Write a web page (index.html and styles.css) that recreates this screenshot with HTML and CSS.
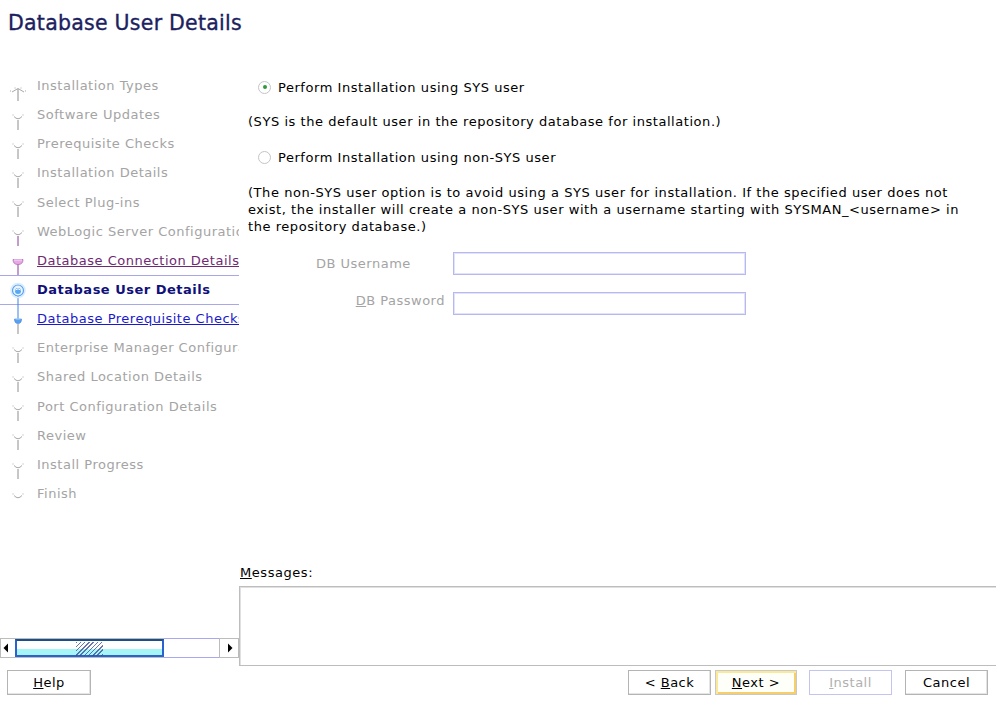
FILE: index.html
```html
<!DOCTYPE html>
<html>
<head>
<meta charset="utf-8">
<link rel="stylesheet" href="styles.css">
</head>
<body>
<div class="app">
  <header class="title">Database User Details</header>
  <div class="middle">
    <aside class="left">
      <nav class="steps">
        <div class="step"><svg class="ico" viewBox="0 0 37 29"><path class="ln" d="M18 17 V43"/><path class="cp" d="M12 20 L18 16.5 L24 20 M10.5 18.5 v1 M25.5 18.5 v1 M15 15.5 v1 M21 15.5 v1"/></svg><span>Installation Types</span></div>
        <div class="step"><svg class="ico" viewBox="0 0 37 29"><path class="ln" d="M18 19 V43"/><path class="cp" d="M14 15.5 Q18 20 22 15.5 M13 13.5 v1 M23 13.5 v1"/></svg><span>Software Updates</span></div>
        <div class="step"><svg class="ico" viewBox="0 0 37 29"><path class="ln" d="M18 19 V43"/><path class="cp" d="M14 15.5 Q18 20 22 15.5 M13 13.5 v1 M23 13.5 v1"/></svg><span>Prerequisite Checks</span></div>
        <div class="step"><svg class="ico" viewBox="0 0 37 29"><path class="ln" d="M18 19 V43"/><path class="cp" d="M14 15.5 Q18 20 22 15.5 M13 13.5 v1 M23 13.5 v1"/></svg><span>Installation Details</span></div>
        <div class="step"><svg class="ico" viewBox="0 0 37 29"><path class="ln" d="M18 19 V43"/><path class="cp" d="M14 15.5 Q18 20 22 15.5 M13 13.5 v1 M23 13.5 v1"/></svg><span>Select Plug-ins</span></div>
        <div class="step"><svg class="ico" viewBox="0 0 37 29"><path class="ln purple" d="M18 19 V41"/><path class="cp" d="M14 15.5 Q18 20 22 15.5 M13 13.5 v1 M23 13.5 v1"/></svg><span>WebLogic Server Configuration Details</span></div>
        <div class="step visited"><svg class="ico" viewBox="0 0 37 29"><path class="ln purple" d="M18 17 V29"/><path class="ln blue" d="M18 29 V37"/><path d="M13 13.5 Q13 18.5 18 18.5 Q23 18.5 23 13.5 Z" fill="#e8a8e8" stroke="#b070b0" stroke-width="0.8"/><path d="M14 14 H22" stroke="#f8e0f8" stroke-width="1"/></svg><span>Database Connection Details</span></div>
        <div class="step current"><svg class="ico" viewBox="0 0 37 29"><path class="ln blue" d="M18 20 V45"/><circle cx="18" cy="14.5" r="7" fill="none" stroke="#d8ecff" stroke-width="1.5"/><circle cx="18" cy="14.5" r="5.5" fill="#e8f4ff" stroke="#5aa0f0" stroke-width="1.2"/><circle cx="18" cy="15" r="3" fill="#5aa8f0"/><path d="M15.5 14 Q18 11.5 20.5 14" stroke="#ffffff" stroke-width="1" fill="none"/></svg><span>Database User Details</span></div>
        <div class="step link"><svg class="ico" viewBox="0 0 37 29"><path class="ln" d="M18 19 V43"/><path d="M14.5 14 Q14.5 18.5 18 18.5 Q21.5 18.5 21.5 14 Z" fill="#58a0f0" stroke="#3c80d8" stroke-width="0.6"/><path d="M15.5 14 H20.5" stroke="#b8dcff" stroke-width="1"/></svg><span>Database Prerequisite Checks</span></div>
        <div class="step"><svg class="ico" viewBox="0 0 37 29"><path class="ln" d="M18 19 V43"/><path class="cp" d="M14 15.5 Q18 20 22 15.5 M13 13.5 v1 M23 13.5 v1"/></svg><span>Enterprise Manager Configuration Details</span></div>
        <div class="step"><svg class="ico" viewBox="0 0 37 29"><path class="ln" d="M18 19 V43"/><path class="cp" d="M14 15.5 Q18 20 22 15.5 M13 13.5 v1 M23 13.5 v1"/></svg><span>Shared Location Details</span></div>
        <div class="step"><svg class="ico" viewBox="0 0 37 29"><path class="ln" d="M18 19 V43"/><path class="cp" d="M14 15.5 Q18 20 22 15.5 M13 13.5 v1 M23 13.5 v1"/></svg><span>Port Configuration Details</span></div>
        <div class="step"><svg class="ico" viewBox="0 0 37 29"><path class="ln" d="M18 19 V43"/><path class="cp" d="M14 15.5 Q18 20 22 15.5 M13 13.5 v1 M23 13.5 v1"/></svg><span>Review</span></div>
        <div class="step"><svg class="ico" viewBox="0 0 37 29"><path class="ln" d="M18 19 V43"/><path class="cp" d="M14 15.5 Q18 20 22 15.5 M13 13.5 v1 M23 13.5 v1"/></svg><span>Install Progress</span></div>
        <div class="step"><svg class="ico" viewBox="0 0 37 29"><path class="cp" d="M14 15.5 Q18 20 22 15.5 M13 13.5 v1 M23 13.5 v1"/></svg><span>Finish</span></div>
      </nav>
      <div class="hscroll">
        <div class="arr"><svg viewBox="0 0 14 18" class="arrsvg"><path d="M2.5 9 L7 4.5 V13.5 Z" fill="#000"/></svg></div>
        <div class="thumb"><div class="grip"></div></div>
        <div class="track"></div>
        <div class="arr arr-r"><svg viewBox="0 0 18 18" class="arrsvg"><path d="M12.5 9 L8 4.5 V13.5 Z" fill="#000"/></svg></div>
      </div>
    </aside>
    <main class="right">
      <div class="content">
        <div class="radio-row"><span class="radio on"></span><span>Perform Installation using SYS user</span></div>
        <p class="note first">(SYS is the default user in the repository database for installation.)</p>
        <div class="radio-row second"><span class="radio"></span><span>Perform Installation using non-SYS user</span></div>
        <p class="note para">(The non-SYS user option is to avoid using a SYS user for installation. If the specified user does not<br>exist, the installer will create a non-SYS user with a username starting with SYSMAN_&lt;username&gt; in<br>the repository database.)</p>
        <div class="form">
          <label class="lbl lbl-user">DB Username</label>
          <div class="field"></div>
          <label class="lbl lbl-pass"><u>D</u>B Password</label>
          <div class="field"></div>
        </div>
      </div>
      <div class="messages">
        <div class="msg-label"><u>M</u>essages:</div>
        <div class="msg-box"></div>
      </div>
    </main>
  </div>
  <footer class="buttons">
    <button class="btn help"><u>H</u>elp</button>
    <div class="spacer"></div>
    <button class="btn back">&lt; <u>B</u>ack</button>
    <button class="btn next"><u>N</u>ext &gt;</button>
    <button class="btn install"><u>I</u>nstall</button>
    <button class="btn cancel">Cancel</button>
  </footer>
</div>
</body>
</html>
```

FILE: styles.css
```css
* { box-sizing: border-box; }
html, body { margin: 0; padding: 0; background: #ffffff; }
body {
  font-family: "DejaVu Sans", "Liberation Sans", sans-serif;
  font-size: 13px;
  letter-spacing: 0.55px;
  color: #000;
}
.app {
  width: 996px;
  height: 702px;
  display: flex;
  flex-direction: column;
  overflow: hidden;
}
.title {
  height: 71px;
  padding: 11px 0 0 8px;
  font-size: 20.5px;
  line-height: 24px;
  letter-spacing: 0.25px;
  color: #1b215e;
  -webkit-text-stroke: 0.35px #1b215e;
}
.middle {
  height: 596px;
  display: grid;
  grid-template-columns: 239px 1fr;
}
.left {
  display: flex;
  flex-direction: column;
  justify-content: space-between;
  min-width: 0;
}
.steps {
  padding-top: 0.5px;
  display: flex;
  flex-direction: column;
}
.step {
  height: 29.15px;
  display: flex;
  align-items: center;
  white-space: nowrap;
  overflow: hidden;
  color: #a4a4a4;
  letter-spacing: 0.5px;
}
.step .ico {
  width: 37px;
  height: 29px;
  flex: none;
  overflow: visible;
}
.step span { line-height: 16px; }
.ln { stroke: #8e8e8e; stroke-width: 1; fill: none; }
.ln.purple { stroke: #8a3a9a; }
.ln.blue { stroke: #3d82e8; }
.cp { stroke: #a8a8a8; stroke-width: 1; fill: none; }
.step.visited { color: #6e2a72; }
.step.visited span { text-decoration: underline; }
.step.current {
  color: #10107a;
  font-weight: bold;
  box-shadow: inset 0 1px #a8a8e8, inset 0 -1px #a8a8e8;
  overflow: visible;
}
.step.link { color: #1a1acc; }
.step.link span { text-decoration: underline; }

.hscroll {
  height: 20px;
  margin-bottom: 9px;
  display: flex;
  border: 1px solid #bcbcbc;
  border-right: none;
}
.arr { width: 14px; height: 18px; flex: none; }
.arr-r { width: 20px; border-left: 1px solid #bcbcbc; border-right: 1px solid #bcbcbc; }
.arrsvg { width: 100%; height: 100%; display: block; }
.thumb {
  width: 149px;
  height: 18px;
  border: 2px solid #2a62d0;
  border-top-color: #1a4f8a;
  background: linear-gradient(#ffffff 0, #ffffff 8px, #a6f6f8 8px, #a6f6f8 100%);
  display: flex;
  justify-content: center;
  flex: none;
}
.grip {
  width: 27px;
  height: 14px;
  margin-top: 1px;
  background: repeating-linear-gradient(135deg, #3a4a90 0, #3a4a90 1px, transparent 1px, transparent 3px);
  opacity: 0.75;
}
.track {
  flex: 1;
  border-top: 1px solid #a8a8f0;
  border-bottom: 1px solid #a8a8f0;
  margin-top: -1px;
  height: 20px;
}

.right {
  display: flex;
  flex-direction: column;
  min-width: 0;
}
.content { padding-left: 9px; }
.radio-row {
  margin-top: 6px;
  height: 20px;
  display: flex;
  align-items: center;
  padding-left: 10px;
  gap: 7px;
}
.radio-row.second { margin-top: 15px; }
.radio {
  width: 13px;
  height: 13px;
  border-radius: 50%;
  border: 1px solid #c4c4c4;
  background: #fff;
  position: relative;
  flex: none;
}
.radio.on::after {
  content: "";
  position: absolute;
  left: 3.5px;
  top: 3.5px;
  width: 4px;
  height: 4px;
  border-radius: 50%;
  background: #2f9a3a;
}
.note {
  margin: 0;
  line-height: 20px;
  white-space: nowrap;
}
.note.first { margin-top: 15px; }
.note.para { margin-top: 16.5px; line-height: 17px; }
.form {
  margin-top: 17.5px;
  display: grid;
  grid-template-columns: 205px 293px;
  row-gap: 17px;
  align-items: center;
}
.lbl { color: #a4a4a4; line-height: 16px; letter-spacing: 0.5px; }
.lbl-user { justify-self: start; margin-left: 68px; }
.lbl-pass { justify-self: end; margin-right: 8px; margin-top: -6px; }
.field {
  height: 23px;
  border: 1px solid #b8b8f0;
  box-shadow: inset 0 0 0 1px #e2e2fa;
  background: #fff;
}
.messages {
  margin-top: auto;
  margin-bottom: 1px;
}
.msg-label {
  line-height: 20px;
  height: 20px;
  margin-bottom: 3px;
  padding-left: 1px;
}
.msg-box {
  height: 80px;
  width: calc(100% + 10px);
  border: 1px solid #bdbdbd;
  box-shadow: inset 1px 1px 0 #e0e0e0;
}

.buttons {
  height: 35px;
  display: flex;
  align-items: flex-start;
  padding-top: 3px;
}
.spacer { flex: 1; }
.btn {
  font-family: "DejaVu Sans", "Liberation Sans", sans-serif;
  font-size: 13px;
  letter-spacing: 0.5px;
  color: #000;
  height: 25px;
  width: 83px;
  padding: 0;
  background: #fff;
  border: 1px solid #b4b4b4;
  box-shadow: inset -1px -1px 0 #e4e4e4;
  border-radius: 0;
  flex: none;
}
.btn.help { margin-left: 7px; width: 84px; }
.btn.back { margin-right: 4px; }
.btn.next {
  width: 82px;
  background: #fffffa;
  border: 1px solid #c8c8c8;
  box-shadow: inset 2px 2px 0 #fbe99a, inset -2px -2px 0 #f6cf6a;
  margin-right: 12px;
}
.btn.install {
  color: #b0b0b0;
  border-color: #c4c4f0;
  box-shadow: none;
  margin-right: 13px;
}
.btn.cancel { margin-right: 8px; }
```
